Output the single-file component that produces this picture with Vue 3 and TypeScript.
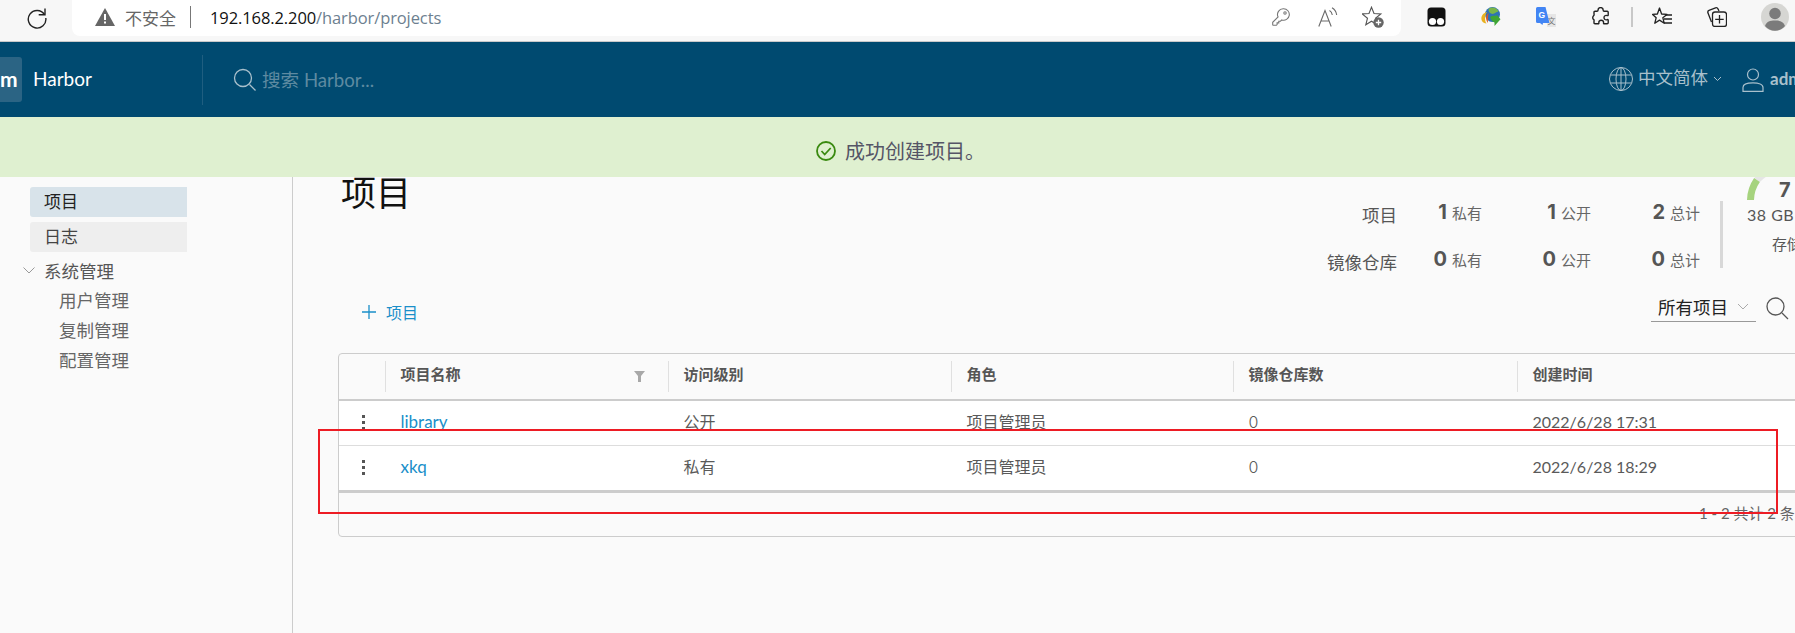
<script setup lang="ts">
interface Row { name: string; access: string; role: string; count: number; time: string }
const columns: string[] = ['项目名称', '访问级别', '角色', '镜像仓库数', '创建时间']
const rows: Row[] = [
  { name: 'library', access: '公开', role: '项目管理员', count: 0, time: '2022/6/28 17:31' },
  { name: 'xkq', access: '私有', role: '项目管理员', count: 0, time: '2022/6/28 18:29' },
]
const stats = [
  { label: '项目', values: [['1', '私有'], ['1', '公开'], ['2', '总计']] },
  { label: '镜像仓库', values: [['0', '私有'], ['0', '公开'], ['0', '总计']] },
]
const subNav: string[] = ['用户管理', '复制管理', '配置管理']
</script>

<template>
  <div class="page">
    <div class="chrome">
      <svg class="reload" width="24" height="24" viewBox="0 0 24 24" fill="none" stroke="#222" stroke-width="1.4">
        <path d="M19.5 9.5A8.8 8.8 0 1 0 20.8 13" />
        <path d="M20 3.5v6.3h-6.3" />
      </svg>
      <div class="omnibox">
        <svg class="warn" width="22" height="20" viewBox="0 0 22 20"><path d="M11 1 21 19H1z" fill="#666" /><rect x="10" y="7" width="2" height="6" fill="#fff" /><rect x="10" y="14.500" width="2" height="2" fill="#fff" /></svg>
        <span class="insecure">不安全</span>
        <span class="sep"></span>
        <span class="url"><span class="host">192.168.2.200</span>/harbor/projects</span>
        <div class="omni-icons">
          <svg width="18" height="18" viewBox="0 0 18 18" fill="none" stroke="#777" stroke-width="1.100"><path d="M11.500.8a5.700 5.700 0 1 1-1.700 11.100L8.500 13.200H6.800v1.700H5.100v1.700l-.7.700H1.200a.5.500 0 0 1-.5-.5v-2.500L6.100 9a5.700 5.700 0 0 1 5.400-8.200z" /><circle cx="13" cy="5" r="1.200" /></svg>
          <svg class="read" width="20" height="20" viewBox="0 0 20 20" fill="none" stroke="#6a6a6a" stroke-width="1.100"><path d="M.8 19.500 7 3.500l6.200 16M3 14h8" /><path d="M11.500 3.500c1.500.8 2.500 2.500 2.800 4.500M14 .8c2.500 1.300 4.200 4 4.700 7.200" /></svg>
          <svg class="fav-add" width="22" height="22" viewBox="0 0 22 22"><path d="M9.500 1.200 12 7.500l6.800.4-5.300 4.300 1.700 6.600L9.500 15.200 3.800 18.800l1.700-6.600L.2 7.900 7 7.500z" fill="none" stroke="#555" stroke-width="1.100" /><circle cx="16.500" cy="16.500" r="5.200" fill="#666" /><path d="M16.500 13.800v5.400M13.800 16.500h5.400" stroke="#fff" stroke-width="1.300" /></svg>
        </div>
      </div>
      <div class="ext-icons">
        <svg width="19" height="20" viewBox="0 0 19 20"><rect x=".5" y=".5" width="18" height="19" rx="3.500" fill="#111" /><circle cx="5.500" cy="14.500" r="3.600" fill="#fff" /><circle cx="13.500" cy="14.500" r="3.600" fill="#fff" /></svg>
        <svg class="idm" width="20" height="20" viewBox="0 0 20 20"><circle cx="11.500" cy="7.500" r="7.500" fill="#2f72b8" /><path d="M8 1.500c3-2 8-1 9.500 3-2.500 0-3.500 2.500-6 2.500S6.500 4 8 1.500z" fill="#7ab648" /><path d="M6 5C2 6-1 10 1 14c.8 1.500 2.500 2.500 4.500 2.500C3.500 13.500 3.500 9 6 5z" fill="#e9b21f" /><path d="M7.500 6C4.500 8.500 4.500 13 7 16c-.2-3.500 0-7 .5-10z" fill="#d8582c" /><path d="M9 10c2-1.500 4-1.500 6.500-1v-1.800l4 5-6 6.800v-3.500c-2-.5-3.500-2.500-4.500-5.500z" fill="#3fa535" /></svg>
        <svg class="gt" width="20" height="20" viewBox="0 0 20 20"><rect x="11" y="7" width="9" height="13" fill="#e6e6e6" /><text x="11.500" y="16.500" font-size="8" fill="#777" font-family="Noto Sans CJK SC">文</text><path d="M0 1.500Q0 0 1.500 0h8L13.500 16H7l-.5 2L4 16H1.500Q0 16 0 14.500z" fill="#4285f4" /><text x="2.500" y="11" font-size="8.500" font-weight="700" fill="#fff" font-family="Liberation Sans">G</text></svg>
        <svg class="puzzle" width="18" height="20" viewBox="0 0 18 20" fill="none" stroke="#222" stroke-width="1.400" stroke-linejoin="round"><path d="M6 3.200a2.600 2.600 0 0 1 5.200 0c0 .6.300 1 .9 1h3.100c.6 0 1 .4 1 1V8c0 .5-.5.800-1 .6-1.800-.7-3.200.4-3.200 2 0 1.700 1.400 2.800 3.200 2 .5-.2 1 .1 1 .6v2.600c0 .6-.4 1-1 1h-3c-.5 0-.8-.4-.7-.9.300-1.400-.6-2.700-2.300-2.700-1.600 0-2.600 1.300-2.300 2.700.1.500-.2.900-.7.900H3c-.6 0-1-.4-1-1v-1.800c0-.5.300-1-.2-1.300-.5-.3-1.100-1-1.100-2 0-1.300 1-2.200 1.300-2.500.3-.3 0-.8 0-1.300V5.200c0-.6.400-1 1-1h1.900C5.600 4.200 6 3.800 6 3.200z" /></svg>
        <span class="ext-sep"></span>
        <svg class="favs" width="20" height="20" viewBox="0 0 20 20" fill="none" stroke="#222" stroke-width="1.300" stroke-linejoin="round"><path d="M7.500 1 9.600 7l5.400.4-4.200 3.300 1.400 5.500-4.700-3.100-4.700 3.100 1.400-5.500L.6 7.400 5.400 7z" /><path d="M13 8h7M12 12h8M12 16h8" /></svg>
        <svg class="coll" width="20" height="20" viewBox="0 0 20 20" fill="none" stroke="#222" stroke-width="1.300"><path d="M4.500 15 .9 5.800Q.4 4 2 3.400L8.500.8Q10.300.3 11 1.900L12 4" /><rect x="5.500" y="5" width="14" height="14.500" rx="2.500" /><path d="M12.500 8v8.500M8.200 12.300h8.500" /></svg>
        <svg class="avatar" width="28" height="28" viewBox="0 0 28 28"><circle cx="14" cy="14" r="14" fill="#d6d6d3" /><circle cx="14" cy="10.500" r="5.800" fill="#7b7b7b" /><path d="M4 23c1.500-4.500 5-5.500 10-5.500S22.500 18.500 24 23c-2.500 3-6 4.800-10 4.800S6.500 26 4 23z" fill="#7b7b7b" /></svg>
      </div>
    </div>

    <header class="topbar">
      <div class="logo">m</div>
      <div class="brand">Harbor</div>
      <div class="search">
        <svg width="24" height="24" viewBox="0 0 24 24" fill="none" stroke="#a9c0cc" stroke-width="1.300"><circle cx="10" cy="10" r="8.500" /><path d="m16.500 16.500 6 6" /></svg>
        <span>搜索 Harbor...</span>
      </div>
      <div class="lang">
        <svg width="24" height="24" viewBox="0 0 24 24" fill="none" stroke="#a9c0cc" stroke-width="1"><circle cx="12" cy="12" r="11.500" /><ellipse cx="12" cy="12" rx="5" ry="11.500" /><path d="M12 .5v23M1.500 8h21M1.500 16h21" /></svg>
        <span>中文简体</span>
        <svg width="9" height="6" viewBox="0 0 9 6" fill="none" stroke="#a9c0cc" stroke-width="1"><path d="m1 1 3.500 3.500L8 1" /></svg>
      </div>
      <div class="user">
        <svg width="22" height="24" viewBox="0 0 22 24" fill="none" stroke="#a9c0cc" stroke-width="1.200"><circle cx="11" cy="6.500" r="5.500" /><path d="M1 23.400v-4c0-3 4.500-4.500 10-4.500s10 1.500 10 4.500v4z" /></svg>
        <span>admin</span>
      </div>
    </header>

    <div class="body">
      <aside class="sidebar">
        <a class="nav active">项目</a>
        <a class="nav hover">日志</a>
        <div class="group">
          <svg width="12" height="7" viewBox="0 0 12 7" fill="none" stroke="#999" stroke-width="1"><path d="m.5.5 5.500 5.500L11.500.5" /></svg>
          <span>系统管理</span>
        </div>
        <a v-for="item in subNav" :key="item" class="sub">{{ item }}</a>
      </aside>

      <main class="main">
        <section class="summary">
          <h1 class="title">项目</h1>
          <div class="stats">
            <template v-for="s in stats" :key="s.label">
              <div class="stat-label">{{ s.label }}</div>
              <div v-for="v in s.values" :key="v[1]" class="stat-cell"><b>{{ v[0] }}</b><span>{{ v[1] }}</span></div>
            </template>
          </div>
          <div class="stat-divider"></div>
          <div class="storage">
            <div class="gauge">
              <svg width="20" height="24" viewBox="0 0 20 24" fill="none" stroke-width="7"><path d="M10 3A36 36 0 0 1 17 -3" stroke="#e6e6e6" /><path d="M3.500 23A36 36 0 0 1 10 3" stroke="#a6d37e" /></svg>
              <b>7</b>
            </div>
            <div class="gb">38 GB</div>
            <div class="store-label">存储</div>
          </div>
        </section>

        <section class="toolbar">
          <button class="add">
            <svg width="14" height="14" viewBox="0 0 14 14" stroke="#1a8fc9" stroke-width="1.300"><path d="M7 0v14M0 7h14" /></svg>
            <span>项目</span>
          </button>
          <div class="filter">
            <span>所有项目</span>
            <svg width="12" height="7" viewBox="0 0 12 7" fill="none" stroke="#aaa" stroke-width="1"><path d="m1 1 5 5 5-5" /></svg>
          </div>
          <svg class="find" width="24" height="24" viewBox="0 0 24 24" fill="none" stroke="#555" stroke-width="1.300"><circle cx="10.500" cy="10.500" r="8.500" /><path d="m17 17 6 6" /></svg>
        </section>

        <section class="table">
          <div class="thead">
            <div class="th first"></div>
            <div v-for="(c, i) in columns" :key="c" class="th">
              <span>{{ c }}</span>
              <svg v-if="i === 0" class="funnel" width="11" height="11" viewBox="0 0 11 11"><path d="M0 0h11L7 5v6H4V5z" fill="#a8a8a8" /></svg>
            </div>
          </div>
          <div v-for="(r, i) in rows" :key="r.name" class="tr" :class="{ last: i === rows.length - 1 }">
            <div class="td dots"><i></i><i></i><i></i></div>
            <div class="td"><a>{{ r.name }}</a></div>
            <div class="td">{{ r.access }}</div>
            <div class="td">{{ r.role }}</div>
            <div class="td num">{{ r.count }}</div>
            <div class="td">{{ r.time }}</div>
          </div>
          <div class="tfoot">1 - 2 共计 2 条记录</div>
        </section>
      </main>
    </div>

    <div class="alert">
      <svg width="20" height="20" viewBox="0 0 20 20" fill="none" stroke="#3a8a10" stroke-width="1.800"><circle cx="10" cy="10" r="9" /><path d="m5.500 10 3.200 3.500 6-6.500" /></svg>
      <span>成功创建项目。</span>
    </div>
    <div class="annotation"></div>
  </div>
</template>

<style scoped>
.page {
  position: relative;
  width: 1795px;
  height: 633px;
  overflow: hidden;
  background: #fafafa;
  color: #565656;
  font-family: "Lato", "Noto Sans CJK SC", sans-serif;
}
.chrome {
  height: 41px;
  border-bottom: 1px solid #c9c9c9;
  background: #f7f7f7;
  display: flex;
  align-items: flex-start;
  overflow: hidden;
}
.reload { margin: 5px 0 0 25px; flex: none; }
.omnibox {
  margin-left: 23px;
  width: 1329px;
  height: 36px;
  padding-bottom: 2px;
  box-sizing: border-box;
  background: #fff;
  border-radius: 0 0 8px 8px;
  display: flex;
  align-items: center;
  flex: none;
  font-family: "Open Sans", "Noto Sans CJK SC", sans-serif;
}
.warn { margin-left: 22px; }
.insecure { margin-left: 9px; font-size: 17px; color: #666; width: 53px; white-space: nowrap; }
.sep { width: 1px; height: 22px; background: #777; margin-left: 12px; }
.url { margin-left: 19px; padding-top: 1px; font-size: 16.5px; color: #6d7f90; white-space: nowrap; letter-spacing: -0.1px; }
.host { color: #111; }
.omni-icons { margin-left: auto; display: flex; align-items: center; padding-right: 17px; }
.read { margin-left: 28px; }
.fav-add { margin-left: 24px; }
.ext-icons { display: flex; align-items: center; height: 34px; margin-left: 26px; flex: none; }
.idm { margin-left: 35px; }
.gt { margin-left: 35px; }
.puzzle { margin-left: 36px; }
.ext-sep { width: 2px; height: 20px; background: #c8c8c8; margin-left: 21px; }
.favs { margin-left: 19px; }
.coll { margin-left: 35px; }
.avatar { margin-left: 34px; flex: none; }

.topbar {
  height: 75px;
  background: #004a70;
  display: flex;
  align-items: center;
  white-space: nowrap;
}
.logo {
  width: 22px;
  height: 45px;
  background: #2b6484;
  border-radius: 0 3px 3px 0;
  color: #fff;
  font-weight: 700;
  font-size: 21px;
  line-height: 43px;
  text-align: right;
  padding-right: 5px;
  box-sizing: border-box;
  overflow: hidden;
  flex: none;
}
.brand { margin-left: 11px; width: 169px; color: #fff; font-size: 19px; height: 50px; line-height: 48px; border-right: 1px solid #1f5e80; flex: none; }
.search { margin-left: 30px; display: flex; align-items: center; gap: 5px; color: #5e8aa1; font-size: 18.6px; width: 1300px; flex: none; }
.search span { padding-bottom: 2px; }
.lang { position: absolute; left: 1609px; top: 67px; display: flex; align-items: center; gap: 5px; color: #a9c0cc; font-size: 17.5px; }
.lang span { line-height: 22px; align-self: flex-start; }
.user { position: absolute; left: 1742px; top: 68px; display: flex; align-items: flex-start; gap: 6px; color: #a9c0cc; font-size: 17px; font-weight: 700; }
.user span { line-height: 21px; }

.body { display: grid; grid-template-columns: 293px 1502px; height: 516px; }
.sidebar {
  box-sizing: border-box;
  border-right: 1px solid #ccc;
  padding: 70px 0 0 30px;
  display: flex;
  flex-direction: column;
  font-size: 17px;
}
.nav {
  width: 157px;
  height: 30px;
  line-height: 30px;
  padding-left: 14px;
  box-sizing: border-box;
  border-radius: 3px 0 0 3px;
  color: #333;
  margin-bottom: 5px;
}
.active { background: #d8e3ea; color: #222; }
.hover { background: #eee; color: #444; }
.group { display: flex; align-items: center; gap: 9px; margin: -2px 0 1px -7px; height: 30px; font-size: 17.5px; }
.sub { margin-left: 29px; height: 30px; line-height: 30px; font-size: 17.5px; color: #666; }

.main { padding-left: 45px; overflow: hidden; }
.summary { height: 178px; display: flex; align-items: flex-start; }
.title { margin: 52px 0 0 3px; font-size: 35px; line-height: 46px; font-weight: 400; color: #111; width: 986px; flex: none; }
.stats {
  margin-top: 75px;
  display: grid;
  grid-template-columns: 70px 85px 109px 109px;
  grid-auto-rows: 47px;
  flex: none;
}
.stat-label { text-align: right; font-size: 17.5px; line-height: 47px; white-space: nowrap; }
.stat-cell { display: flex; justify-content: flex-end; align-items: center; gap: 5px; height: 39px; }
.stat-cell b { font-family: "Inter", sans-serif; font-size: 20px; font-weight: 700; color: #555; }
.stat-cell span { font-size: 15px; color: #666; padding-top: 1px; }
.stat-divider { margin: 84px 0 0 20px; width: 3px; height: 67px; background: #d8d8d8; flex: none; }
.storage { margin-left: 24px; margin-top: 60px; width: 60px; flex: none; font-size: 15px; white-space: nowrap; }
.gauge { display: flex; align-items: flex-start; height: 24px; }
.gauge svg { flex: none; }
.gauge b { margin-left: 12px; font-family: "Inter", sans-serif; font-size: 20px; line-height: 26px; color: #555; }
.gb { margin-top: 2px; height: 24px; line-height: 24px; font-size: 16px; letter-spacing: 0.5px; }
.store-label { margin-top: 6px; margin-left: 25px; }

.toolbar { height: 58px; display: flex; align-items: flex-start; box-sizing: border-box; }
.add { display: flex; align-items: center; gap: 10px; margin: 5px 0 0 24px; padding: 0; background: none; border: 0; color: #1a8fc9; font: inherit; font-size: 16px; height: 24px; flex: none; }
.filter { margin-left: 1233px; width: 105px; height: 28px; margin-top: -1px; border-bottom: 1px solid #999; display: flex; align-items: center; gap: 9px; padding: 0 0 2px 7px; box-sizing: border-box; font-size: 17.5px; color: #222; flex: none; }
.find { margin: 1px 0 0 9px; flex: none; }

.table {
  width: 1520px;
  box-sizing: border-box;
  border: 1px solid #ccc;
  border-radius: 4px;
  height: 184px;
}
.thead, .tr { display: grid; grid-template-columns: 46px 283px 283px 282px 284px 320px; }
.thead { height: 45px; border-bottom: 2px solid #ccc; box-sizing: content-box; align-items: center; }
.th {
  position: relative;
  height: 31px;
  margin-top: -1px;
  line-height: 26px;
  padding-left: 14.5px;
  border-left: 1px solid #e0e0e0;
  font-size: 15px;
  font-weight: 700;
  color: #565656;
}
.first { border-left: 0; }
.funnel { position: absolute; right: 23px; top: 10px; }
.tr { height: 44px; background: #fff; border-bottom: 1px solid #ddd; }
.tr.last { border-bottom: 3px solid #ccc; }
.td { padding-left: 15.5px; font-size: 16px; line-height: 42px; color: #5a5a5a; white-space: nowrap; }
.td a { color: #1a8fc9; font-size: 17px; }
.num { font-family: "Inter", sans-serif; font-weight: 300; }
.dots { padding: 0 0 2px 23px; box-sizing: border-box; display: flex; flex-direction: column; justify-content: center; gap: 3px; }
.dots i { display: block; width: 3px; height: 3px; background: #555; }
.tfoot { margin-top: 9px; padding-left: 1360px; font-size: 15px; line-height: 22px; white-space: nowrap; color: #666; }

.alert {
  position: absolute;
  left: 0;
  top: 117px;
  width: 100%;
  height: 60px;
  background: #dff0d0;
  display: flex;
  align-items: center;
  justify-content: center;
  gap: 9px;
  font-size: 20px;
  color: #556;
  padding: 8px 0 0 6px;
  box-sizing: border-box;
}
.alert span { padding-bottom: 2px; }
.annotation {
  position: absolute;
  left: 318px;
  top: 429px;
  width: 1460px;
  height: 85px;
  box-sizing: border-box;
  border: 2px solid #ed1c24;
  pointer-events: none;
}
</style>
